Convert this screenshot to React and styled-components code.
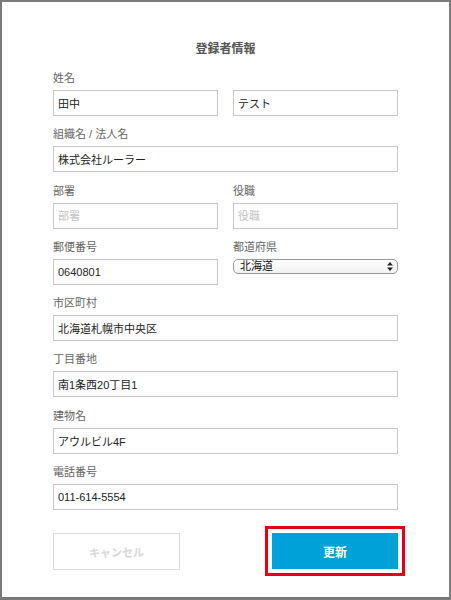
import React from 'react';
import styled, { createGlobalStyle } from 'styled-components';

const GlobalStyle = createGlobalStyle`
    html, body {
        margin: 0;
        padding: 0;
        background: #fff;
    }
    body {
        font-family: "Liberation Sans", "Noto Sans CJK JP", sans-serif;
    }
`;

// 外枠
const Frame = styled.div`
    box-sizing: border-box;
    width: 451px;
    height: 600px;
    border: 2px solid #7a7a7a;
    border-bottom-width: 3px;
    background: #fff;
    padding: 39px 51px 0;
`;

const Title = styled.h1`
    margin: 0 0 14px;
    font-size: 12px;
    line-height: 16px;
    font-weight: bold;
    color: #555;
    text-align: center;
`;

// 1行分のブロック
const Row = styled.div`
    display: grid;
    grid-template-columns: ${(p) => (p.$split ? '165px 165px' : '1fr')};
    column-gap: 15px;
    margin-bottom: 11.3px;
`;

const Pair = styled.div`
    display: grid;
    grid-template-columns: 165px 165px;
    column-gap: 15px;
`;

const Field = styled.div`
    display: flex;
    flex-direction: column;
`;

const Label = styled.label`
    display: block;
    height: 14px;
    margin-bottom: 5px;
    font-size: 11px;
    line-height: 14px;
    color: #666;
`;

const Input = styled.input`
    box-sizing: border-box;
    width: 100%;
    height: 26px;
    margin: 0;
    padding: 0 4px;
    border: 1px solid #c8c8c8;
    border-radius: 0;
    background: #fff;
    font-family: inherit;
    font-size: 11px;
    color: #222;
    outline: none;

    &::placeholder {
        color: #c4c4c4;
    }
`;

// mac風のセレクト
const SelectWrap = styled.div`
    position: relative;
    height: 26px;
`;

const Select = styled.select`
    display: block;
    box-sizing: border-box;
    appearance: none;
    -webkit-appearance: none;
    width: 100%;
    height: 15px;
    margin: 0;
    padding: 0 0 0 6px;
    border: 1px solid #9a9a9a;
    border-radius: 5px;
    background: linear-gradient(#ffffff, #f1f1f1);
    font-family: inherit;
    font-size: 11px;
    line-height: 13px;
    color: #111;
    outline: none;
`;

const Arrows = styled.svg`
    position: absolute;
    top: 3px;
    right: 5px;
    pointer-events: none;
`;

const Actions = styled.div`
    display: flex;
    justify-content: space-between;
    align-items: flex-start;
    margin-top: 23px;
`;

const CancelButton = styled.button`
    box-sizing: border-box;
    width: 127px;
    height: 37px;
    border: 1px solid #dcdcdc;
    background: #fff;
    color: #d8d8d8;
    font-family: inherit;
    font-size: 11px;
    font-weight: bold;
    cursor: default;
`;

const SubmitButton = styled.button`
    box-sizing: border-box;
    width: 126px;
    height: 36px;
    border: none;
    background: #00a0d8;
    color: #fff;
    font-family: inherit;
    font-size: 12px;
    font-weight: bold;
    outline: 3px solid #e60012;
    outline-offset: 4px;
`;

const TextField = ({ label, value, placeholder }) => (
    <Field>
        <Label>{label}</Label>
        <Input defaultValue={value} placeholder={placeholder} />
    </Field>
);

export default function App() {
    return (
        <>
            <GlobalStyle />
            <Frame>
                <Title>登録者情報</Title>

                <Row>
                    <Field>
                        <Label>姓名</Label>
                        <Pair>
                            <Input defaultValue="田中" />
                            <Input defaultValue="テスト" />
                        </Pair>
                    </Field>
                </Row>

                <Row>
                    <TextField label="組織名 / 法人名" value="株式会社ルーラー" />
                </Row>

                <Row $split>
                    <TextField label="部署" placeholder="部署" />
                    <TextField label="役職" placeholder="役職" />
                </Row>

                <Row $split>
                    <TextField label="郵便番号" value="0640801" />
                    <Field>
                        <Label>都道府県</Label>
                        <SelectWrap>
                            <Select defaultValue="hokkaido">
                                <option value="hokkaido">北海道</option>
                            </Select>
                            <Arrows width="6" height="9" viewBox="0 0 6 9">
                                <path d="M3 0 L6 3.5 L0 3.5 Z" fill="#222" />
                                <path d="M3 9 L6 5.5 L0 5.5 Z" fill="#222" />
                            </Arrows>
                        </SelectWrap>
                    </Field>
                </Row>

                <Row>
                    <TextField label="市区町村" value="北海道札幌市中央区" />
                </Row>
                <Row>
                    <TextField label="丁目番地" value="南1条西20丁目1" />
                </Row>
                <Row>
                    <TextField label="建物名" value="アウルビル4F" />
                </Row>
                <Row>
                    <TextField label="電話番号" value="011-614-5554" />
                </Row>

                <Actions>
                    <CancelButton>キャンセル</CancelButton>
                    <SubmitButton>更新</SubmitButton>
                </Actions>
            </Frame>
        </>
    );
}
